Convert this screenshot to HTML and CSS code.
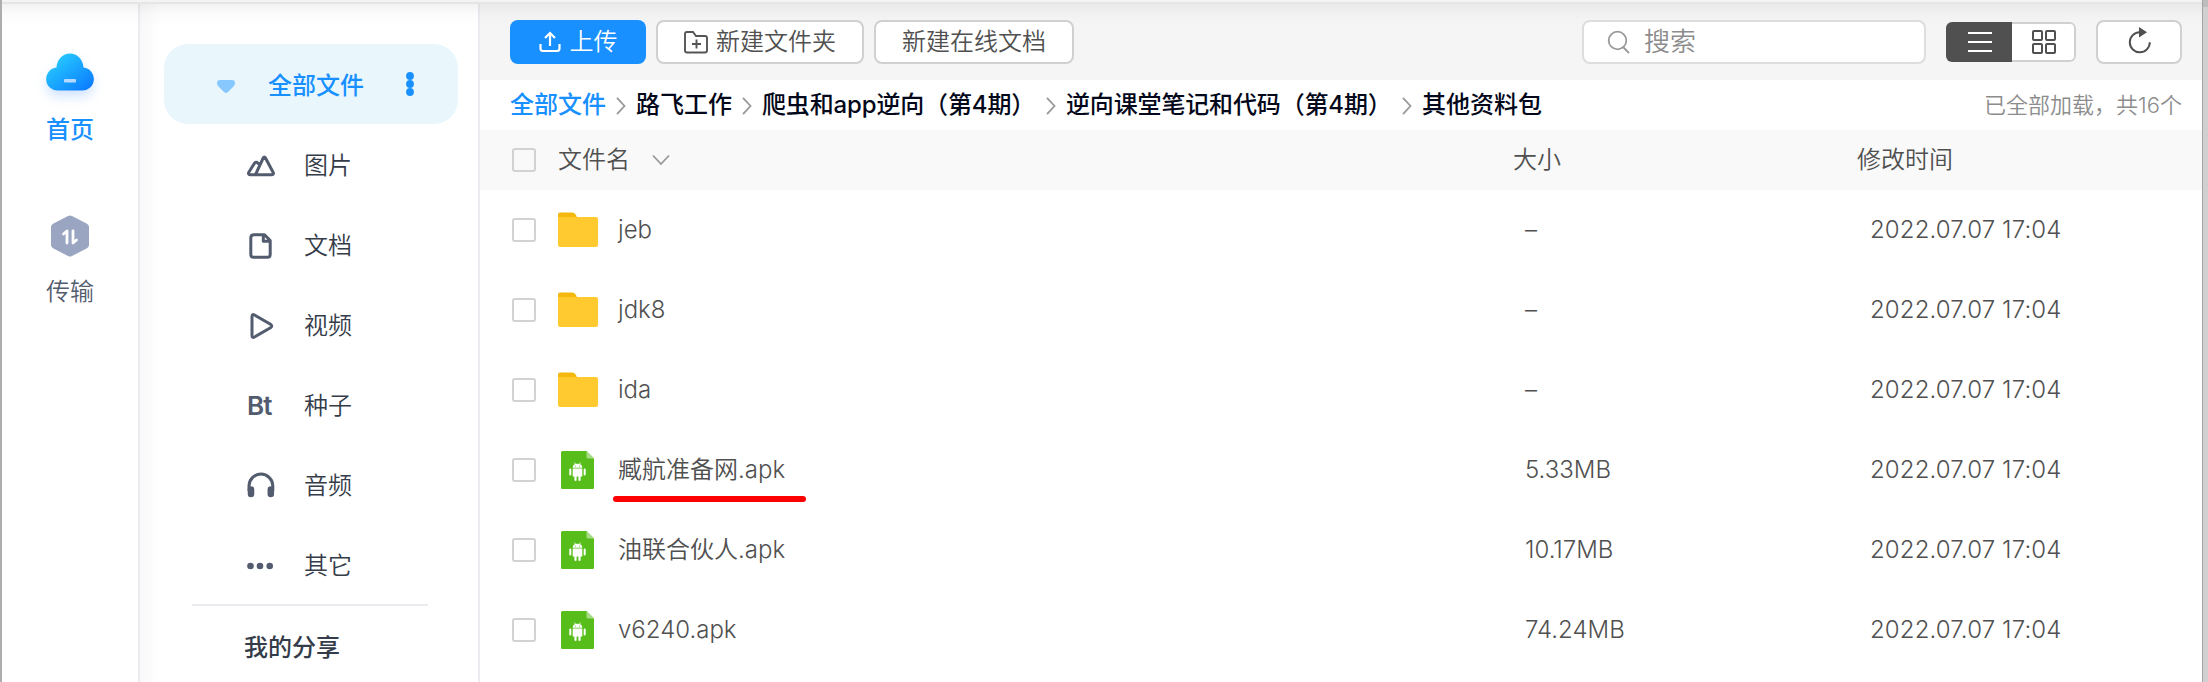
FILE: index.html
```html
<!DOCTYPE html>
<html lang="zh-CN">
<head>
<meta charset="utf-8">
<title>全部文件</title>
<link rel="stylesheet" href="styles.css">
</head>
<body>
<svg class="defs" width="0" height="0">
  <symbol id="folder" viewBox="0 0 40 36">
    <path d="M0 8V2.500Q0 .5 2 .5H14Q17 .5 18.500 4L19.500 8Z" fill="#f5b80f"/>
    <path d="M0 5H38Q40 5 40 7V33Q40 35 38 35H2Q0 35 0 33Z" fill="#ffc930"/>
  </symbol>
  <symbol id="apk" viewBox="0 0 33 38">
    <path d="M1.500 0H25.500L33 7.500V36.500Q33 38 31.500 38H1.500Q0 38 0 36.500V1.500Q0 0 1.500 0Z" fill="#57bd1b"/>
    <path d="M25.500 0L33 7.500H27Q25.500 7.500 25.500 6Z" fill="#a5dc85"/>
    <path d="M13.500 11.500l1.200 2M19.500 11.500l-1.200 2" stroke="#fff" stroke-width=".8"/>
    <path d="M11.700 16.700Q11.700 12.700 16.500 12.700T21.300 16.700Z" fill="#fff"/>
    <path d="M11.700 17.500H21.300V25.500H19.600V29a1.100 1.100 0 0 1-2.200 0V25.500H15.600V29a1.100 1.100 0 0 1-2.200 0V25.500H11.700Z" fill="#fff"/>
    <path d="M9.300 18.500V23.500M23.700 18.500V23.500" stroke="#fff" stroke-width="2" stroke-linecap="round"/>
    <circle cx="14.500" cy="14.900" r=".5" fill="#57bd1b"/><circle cx="18.500" cy="14.900" r=".5" fill="#57bd1b"/>
  </symbol>
  <symbol id="sep" viewBox="0 0 10 18">
    <path d="M1 .8L8.500 9L1 17.200" fill="none" stroke="#999" stroke-width="1.800"/>
  </symbol>
</svg>
<div class="window">
  <nav class="rail">
    <a class="rail-item rail-on">
      <svg class="cloud" width="70" height="60" viewBox="0 0 70 60">
        <defs><linearGradient id="g" x1="0" y1="0" x2="1" y2="1"><stop offset=".1" stop-color="#27ceff"/><stop offset="1" stop-color="#0a75ff"/></linearGradient></defs>
        <path d="M24 48.500a11.600 11.600 0 0 1-2.500-23.100C22 17.500 27.800 11.500 35 11.500s13 6 13.500 13.900A11.600 11.600 0 0 1 46 48.500Z" fill="url(#g)"/>
        <rect x="29" y="37" width="12" height="3.600" rx="1" fill="#b5daff"/>
      </svg>
      <span>首页</span>
    </a>
    <a class="rail-item">
      <svg width="40" height="44" viewBox="0 0 40 44">
        <path d="M18 2Q20 .8 22 2L37 9.800Q39 11 39 13V31Q39 33 37 34.200L22 42Q20 43.200 18 42L3 34.200Q1 33 1 31V13Q1 11 3 9.800Z" fill="#9aa5c1"/>
        <path d="M13.500 20L17 17V29M23 17V29L26.500 26" fill="none" stroke="#fff" stroke-width="2.800" stroke-linecap="round" stroke-linejoin="round"/>
      </svg>
      <span>传输</span>
    </a>
  </nav>
  <aside class="side">
    <div class="cat-on">
      <svg class="caret" width="18" height="14" viewBox="0 0 18 14"><path d="M3 0H15Q18 0 18 3Q18 5 16.500 6.500L11 12Q9 14 7 12L1.500 6.500Q0 5 0 3Q0 0 3 0Z" fill="#87c8ff"/></svg>
      <span class="cat-title">全部文件</span>
      <svg width="8" height="24" viewBox="0 0 8 24" fill="#1890ff"><circle cx="4" cy="4" r="3.900"/><circle cx="4" cy="12" r="3.900"/><circle cx="4" cy="20" r="3.900"/></svg>
    </div>
    <div class="cat">
      <svg class="ico" viewBox="0 0 28 28"><path d="M8.500 22.700L16.200 6Q17.300 4 18.500 6L26.200 20.500Q27 22.700 25 22.700H3.500Q.8 22.700 1.800 20.300L7.300 11.500Q9 9.300 11 11.300L12.500 12.800"/></svg>
      <span>图片</span>
    </div>
    <div class="cat">
      <svg class="ico" viewBox="0 0 28 28"><path d="M7 2.700H17.500L23.200 8.500V22.500Q23.200 25.200 20.500 25.200H6.500Q3.800 25.200 3.800 22.500V5.700Q3.800 2.700 7 2.700ZM16.300 3V9.300H23"/></svg>
      <span>文档</span>
    </div>
    <div class="cat">
      <svg class="ico" viewBox="0 0 28 28"><path d="M5 4.500Q5 1.700 7.500 3L23.500 12.300Q26 14 23.500 15.700L7.500 25Q5 26.300 5 23.500Z"/></svg>
      <span>视频</span>
    </div>
    <div class="cat">
      <b class="bt">Bt</b>
      <span>种子</span>
    </div>
    <div class="cat">
      <svg class="ico" viewBox="0 0 28 28"><path d="M2 19V14A11.900 11.900 0 0 1 25.800 14V19"/><path d="M4 17.500V22M23.800 17.500V22" stroke-width="6.500" stroke-linecap="round"/></svg>
      <span>音频</span>
    </div>
    <div class="cat">
      <svg class="ico" viewBox="0 0 28 28"><g fill="#525c6e" stroke="none"><circle cx="3.500" cy="14" r="3.300"/><circle cx="13" cy="14" r="3.300"/><circle cx="22.700" cy="14" r="3.300"/></g></svg>
      <span>其它</span>
    </div>
    <div class="rule"></div>
    <div class="share">我的分享</div>
  </aside>
  <main class="main">
    <header class="bar">
      <button class="btn upload"><svg width="22" height="22" viewBox="0 0 22 22" fill="none" stroke="#fff" stroke-width="2.200"><path d="M1.500 13V17.500Q1.500 20 4 20H18Q20.500 20 20.500 17.500V13M11 15V2.500M6 7L11 2L16 7"/></svg>上传</button>
      <button class="btn mk"><svg width="24" height="24" viewBox="0 0 24 24" fill="none" stroke="#555" stroke-width="1.900"><path d="M1 4Q1 2 3 2H9L12 6H21Q23 6 23 8V20.500Q23 22.500 21 22.500H3Q1 22.500 1 20.500ZM12.500 9.500V18.500M8 14H17"/></svg>新建文件夹</button>
      <button class="btn doc">新建在线文档</button>
      <div class="search"><svg width="24" height="24" viewBox="0 0 24 24" fill="none" stroke="#999" stroke-width="1.800"><circle cx="10.500" cy="10.500" r="8.800"/><path d="M16 17L22 23"/></svg>搜索</div>
      <div class="views">
        <div class="view-on"><svg width="24" height="20" viewBox="0 0 24 20" fill="#fff"><path d="M0 0H24V2H0ZM0 9H24V11H0ZM0 18H24V20H0Z"/></svg></div>
        <div class="view"><svg width="26" height="26" viewBox="0 0 26 26" fill="none" stroke="#505050" stroke-width="2"><rect x="2" y="2" width="9" height="9" rx="1"/><rect x="15" y="2" width="9" height="9" rx="1"/><rect x="2" y="15" width="9" height="9" rx="1"/><rect x="15" y="15" width="9" height="9" rx="1"/></svg></div>
      </div>
      <button class="btn reload"><svg width="26" height="28" viewBox="0 0 26 28"><path d="M14 5.300H12.500A10 10 0 1 0 22.800 15.300" fill="none" stroke="#505050" stroke-width="2"/><path d="M12 0L20 5.300L12 10.500Z" fill="#505050"/></svg></button>
    </header>
    <div class="crumbs">
      <span class="root">全部文件</span><svg class="sep"><use href="#sep"/></svg>
      <span>路飞工作</span><svg class="sep"><use href="#sep"/></svg>
      <span class="c3">爬虫和app逆向（第4期）</span><svg class="sep"><use href="#sep"/></svg>
      <span class="c4">逆向课堂笔记和代码（第4期）</span><svg class="sep"><use href="#sep"/></svg>
      <span>其他资料包</span>
      <span class="count">已全部加载，共16个</span>
    </div>
    <div class="head">
      <i class="box"></i>
      <span class="h-name">文件名<svg width="18" height="12" viewBox="0 0 18 12"><path d="M1 1.500L9 10L17 1.500" fill="none" stroke="#999" stroke-width="1.800"/></svg></span>
      <span class="h-size">大小</span>
      <span class="h-time">修改时间</span>
    </div>
    <div class="row"><i class="box"></i><svg class="folder"><use href="#folder"/></svg><span class="name">jeb</span><span class="size">–</span><span class="time">2022.07.07 17:04</span></div>
    <div class="row"><i class="box"></i><svg class="folder"><use href="#folder"/></svg><span class="name">jdk8</span><span class="size">–</span><span class="time">2022.07.07 17:04</span></div>
    <div class="row"><i class="box"></i><svg class="folder"><use href="#folder"/></svg><span class="name">ida</span><span class="size">–</span><span class="time">2022.07.07 17:04</span></div>
    <div class="row"><i class="box"></i><svg class="apk"><use href="#apk"/></svg><span class="name marked">臧航准备网.apk</span><span class="size">5.33MB</span><span class="time">2022.07.07 17:04</span></div>
    <div class="row"><i class="box"></i><svg class="apk"><use href="#apk"/></svg><span class="name">油联合伙人.apk</span><span class="size">10.17MB</span><span class="time">2022.07.07 17:04</span></div>
    <div class="row"><i class="box"></i><svg class="apk"><use href="#apk"/></svg><span class="name">v6240.apk</span><span class="size">74.24MB</span><span class="time">2022.07.07 17:04</span></div>
  </main>
  <div class="edge"></div>
</div>
</body>
</html>
```

FILE: styles.css
```css
* { box-sizing: border-box; }
body {
  margin: 0;
  background: #fff;
  font-family: Inter, "Noto Sans CJK SC", sans-serif;
  font-size: 24px;
  font-weight: 350;
  line-height: 36px;
  color: #505050;
}
svg { flex: none; display: block; }
.defs { position: absolute; }
span, button { white-space: nowrap; }

.window {
  position: relative;
  display: flex;
  width: 2208px;
  height: 682px;
  overflow: hidden;
  border-left: 2px solid #adadad;
}
/* Shadow cast by the title bar over the content */
.window::before {
  content: "";
  position: absolute;
  inset: 0 6px auto 0;
  height: 26px;
  background: linear-gradient(#f3f3f3 2px, #e5e5e5 2px, #e5e5e5 4px, rgba(0,0,0,.05) 4px, rgba(0,0,0,.015) 14px, rgba(0,0,0,0) 26px);
}

/* Left rail */
.rail {
  width: 138px;
  padding-top: 42px;
  border-right: 2px solid #ebecf0;
  display: flex;
  flex-direction: column;
  align-items: center;
  color: #525c6e;
}
.rail-item {
  display: flex;
  flex-direction: column;
  align-items: center;
  height: 172px;
}
.rail-item span { margin-top: 16px; }
.rail-on { color: #1890ff; font-weight: 500; }
.rail-on span { margin-top: 10px; }
.rail .cloud { filter: drop-shadow(0 6px 6px rgba(24,120,255,.2)); }

/* Categories */
.side {
  width: 340px;
  padding: 44px 20px 0 24px;
  border-right: 2px solid #ebecf0;
  background: linear-gradient(90deg, #f8f8f8, #fff 20px);
  color: #353c49;
}
.cat-on {
  display: flex;
  align-items: center;
  height: 80px;
  margin-bottom: 2px;
  padding: 0 45px 0 53px;
  border-radius: 24px;
  background: #e9f7fd;
  color: #1890ff;
  font-weight: 500;
}
.caret { margin-top: 6px; }
.cat-title { margin: 3px 42px 0 33px; }
.cat { display: flex; align-items: center; height: 80px; padding-left: 83px; }
.cat span { margin-left: 29px; }
.ico { width: 28px; height: 28px; fill: none; stroke: #525c6e; stroke-width: 3; stroke-linejoin: round; overflow: visible; }
.bt { width: 28px; font-size: 26px; font-weight: 600; letter-spacing: -1px; color: #525c6e; }
.rule { width: 236px; height: 2px; margin: -2px 0 0 28px; background: #ebecf0; }
.share { padding: 24px 0 0 80px; font-weight: 500; }

/* File browser */
.main { width: 1722px; }
.bar {
  display: flex;
  align-items: center;
  height: 80px;
  padding: 4px 20px 0 30px;
  background: #f5f5f5;
}
.btn {
  display: flex;
  align-items: center;
  justify-content: center;
  height: 44px;
  padding: 0;
  border: 2px solid #d0d0d0;
  border-radius: 8px;
  background: #fff;
  color: #505050;
  font: inherit;
}
.upload { width: 136px; gap: 9px; border: 0; background: #1890ff; color: #fff; }
.mk { width: 208px; margin-left: 10px; gap: 8px; }
.doc { width: 200px; margin-left: 10px; }
.search {
  display: flex;
  align-items: center;
  gap: 13px;
  width: 344px;
  height: 44px;
  margin-left: auto;
  padding-left: 23px;
  border: 2px solid #ddd;
  border-radius: 8px;
  background: #fff;
  color: #8c8c8c;
  font-size: 26px;
}
.views {
  display: flex;
  width: 130px;
  height: 40px;
  margin: 0 20px;
  border-radius: 6px;
  overflow: hidden;
}
.view-on, .view { display: flex; align-items: center; justify-content: center; }
.view-on { width: 66px; padding-left: 2px; background: #505050; }
.view { width: 64px; padding-left: 2px; border: 2px solid #d0d0d0; border-left: 0; border-radius: 0 6px 6px 0; background: #fff; }
.reload { width: 86px; padding: 0 0 2px 1px; }
.bar .btn, .search, .views { position: relative; }

.crumbs {
  display: flex;
  align-items: center;
  height: 50px;
  padding: 0 20px 0 30px;
  color: #03081a;
  font-weight: 500;
}
.sep { width: 10px; height: 18px; margin: 2px 10px 0; }
.root { color: #1890ff; }
.c3 { width: 274px; letter-spacing: -.15px; }
.c4 { width: 326px; letter-spacing: -.15px; }
.count { margin-left: auto; color: #8c8c8c; font-size: 22px; font-weight: 350; }

.head, .row { display: grid; grid-template-columns: 48px 60px 907px 345px 1fr; align-items: center; padding-left: 30px; }
.head { height: 60px; background: #f9f9f9; grid-template-columns: 48px 955px 344px 1fr; }
.row { height: 80px; }
.box { width: 24px; height: 24px; margin-left: 2px; border: 2px solid #d2d2d2; border-radius: 3px; }
.h-name { display: flex; align-items: center; gap: 22px; }
.folder { width: 40px; height: 36px; }
.apk { width: 33px; height: 38px; margin-left: 3px; }
.time { letter-spacing: .13px; }
.name { justify-self: start; position: relative; }
.marked::after {
  content: "";
  position: absolute;
  left: -5px;
  top: 44px;
  width: 193px;
  height: 6px;
  border-radius: 3px;
  background: #f00;
}
.edge { flex: 1; border-left: 1px solid #a5a5a5; background: linear-gradient(#bdbdbd 7px, #d0d0d0 7px); }
```
